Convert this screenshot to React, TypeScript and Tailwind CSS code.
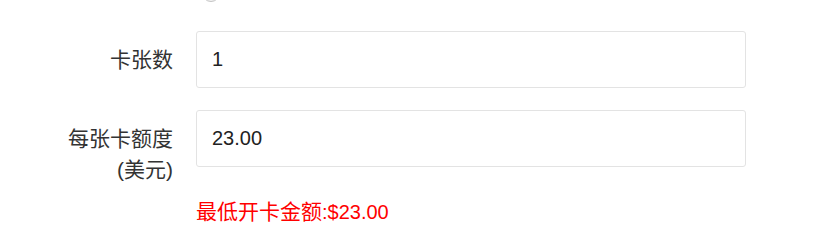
import { useState } from 'react'

const font = { fontFamily: '"Liberation Sans", "Noto Sans CJK SC", sans-serif' }

function Field({ label, sub, value, onChange }: { label: string; sub?: string; value: string; onChange: (v: string) => void }) {
  return (
    <div className="flex items-start">
      <div className="w-[173px] shrink-0 pt-[13px] text-right text-[21px] leading-[31px] text-[#333]">
        <div>{label}</div>
        {sub && <div>{sub}</div>}
      </div>
      <input
        value={value}
        onChange={(e) => onChange(e.target.value)}
        className="ml-[23px] h-[57px] w-[550px] rounded-[3px] border border-[#e3e3e3] bg-white px-[15px] text-[20px] text-[#222] outline-none"
        style={font}
      />
    </div>
  )
}

export default function App() {
  const [count, setCount] = useState('1')
  const [amount, setAmount] = useState('23.00')

  return (
    <div className="h-[243px] w-[833px] overflow-hidden bg-white" style={font}>
      {/* bottom of the radio from the row above */}
      <div className="ml-[202px] -mt-[16px] h-[18px] w-[18px] rounded-full border border-[#c4c4c4] bg-[#f2f2f2]" />

      <div className="mt-[29px] flex flex-col gap-[22px]">
        <Field label="卡张数" value={count} onChange={setCount} />
        <Field label="每张卡额度" sub="(美元)" value={amount} onChange={setAmount} />
      </div>

      <p className="ml-[196px] mt-[15px] text-[20px] leading-[24px] text-[#ff0000]">
        <span className="text-[21px]">最低开卡金额</span>:$23.00
      </p>
    </div>
  )
}
